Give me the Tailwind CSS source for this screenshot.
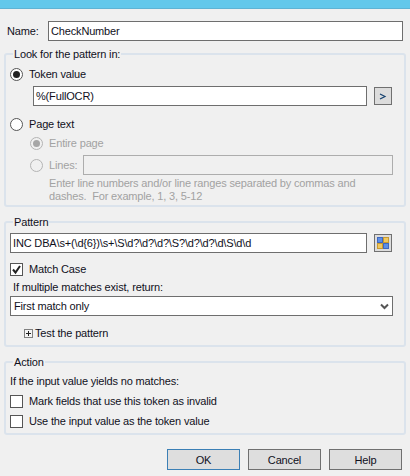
<!DOCTYPE html>
<html lang="en">
<head>
    <meta charset="UTF-8">
    <title>Regex token</title>
    <script src="https://cdn.jsdelivr.net/npm/@tailwindcss/browser@4"></script>
</head>
<body class="bg-[#f0f0f0] overflow-hidden">
    <div class="w-[410px] h-[476px] flex flex-col font-['Liberation_Sans',sans-serif] text-[11px] tracking-[-0.16px] leading-[16px] text-[#10101c]">
        <!-- title bar strip -->
        <div class="h-[9px] bg-[#63c8eb] border-b border-[#5fb3d4]"></div>

        <!-- Name -->
        <div class="mt-[12px] h-[20px] flex items-center pl-[7px] pr-[7px]">
            <span class="w-[41px]">Name:</span>
            <div class="w-[355px] h-[20px] bg-white border border-[#6e6e6e] px-[2px] flex items-center">CheckNumber</div>
        </div>

        <!-- Look for the pattern in -->
        <div class="relative mt-[12px] mx-[4px] h-[154px] border-2 border-[#dbe3ec] rounded-[3px] pl-[4px] pt-[11px]">
            <span class="absolute left-[7px] top-[-9px] bg-[#f0f0f0] px-[1px]">Look for the pattern in:</span>
            <div class="h-[16px] flex items-center">
                <span class="w-[13px] h-[13px] rounded-full border border-[#555] bg-white flex items-center justify-center"><span class="w-[7px] h-[7px] rounded-full bg-[#222]"></span></span>
                <span class="ml-[6px]">Token value</span>
            </div>
            <div class="mt-[4px] ml-[23px] flex items-center">
                <div class="w-[334px] h-[20px] bg-white border border-[#6e6e6e] px-[2px] flex items-center">%(FullOCR)</div>
                <div class="ml-[7px] w-[18px] h-[18px] bg-[#dcdcdc] border border-[#707070] flex items-center justify-center">
                    <svg width="8" height="7" viewBox="0 0 8 7"><path d="M1 1 L6 3.5 L1 6" fill="none" stroke="#14406e" stroke-width="1.2"/></svg>
                </div>
            </div>
            <div class="mt-[10px] h-[16px] flex items-center">
                <span class="w-[13px] h-[13px] rounded-full border border-[#555] bg-white"></span>
                <span class="ml-[6px]">Page text</span>
            </div>
            <div class="ml-[20px] text-[#a2a2a2]">
                <div class="mt-[3px] h-[16px] flex items-center">
                    <span class="w-[13px] h-[13px] rounded-full border border-[#b4b4b4] bg-[#f0f0f0] flex items-center justify-center"><span class="w-[7px] h-[7px] rounded-full bg-[#a6a6a6]"></span></span>
                    <span class="ml-[6px]">Entire page</span>
                </div>
                <div class="mt-[4px] h-[20px] flex items-center">
                    <span class="w-[13px] h-[13px] rounded-full border border-[#b4b4b4] bg-[#f0f0f0]"></span>
                    <span class="ml-[6px] w-[34px]">Lines:</span>
                    <div class="w-[310px] h-[20px] border border-[#adadad]"></div>
                </div>
                <p class="mt-[2px] ml-[19px] leading-[13px] w-[330px]">Enter line numbers and/or line ranges separated by commas and<br>dashes.&nbsp; For example, 1, 3, 5-12</p>
            </div>
        </div>

        <!-- Pattern -->
        <div class="relative mt-[14px] mx-[4px] h-[126px] border-2 border-[#dbe3ec] rounded-[3px] pl-[4px] pt-[10px]">
            <span class="absolute left-[7px] top-[-9px] bg-[#f0f0f0] px-[1px]">Pattern</span>
            <div class="flex items-center">
                <div class="w-[357px] h-[20px] bg-white border border-[#6e6e6e] px-[2px] flex items-center whitespace-nowrap overflow-hidden">INC DBA\s+(\d{6})\s+\S\d?\d?\d?\S?\d?\d?\d\S\d\d</div>
                <div class="ml-[7px] w-[18px] h-[18px] bg-[#dcdcdc] border border-[#707070] flex items-center justify-center">
                    <svg width="12" height="12" viewBox="0 0 12 12">
                        <rect x="0.5" y="0.5" width="5" height="5" fill="#5c8fe6" stroke="#3f68c0"/>
                        <rect x="6.5" y="0.5" width="5" height="5" fill="#f0c860" stroke="#c89a30"/>
                        <rect x="0.5" y="6.5" width="5" height="5" fill="#f0c860" stroke="#c89a30"/>
                        <rect x="6.5" y="6.5" width="5" height="5" fill="#5c8fe6" stroke="#3f68c0"/>
                    </svg>
                </div>
            </div>
            <div class="mt-[9px] h-[14px] flex items-center">
                <span class="w-[13px] h-[13px] border border-[#555] bg-white flex items-center justify-center">
                    <svg width="11" height="11" viewBox="0 0 11 11"><path d="M2 5.5 L4.5 8.5 L9 2" fill="none" stroke="#222" stroke-width="2"/></svg>
                </span>
                <span class="ml-[6px]">Match Case</span>
            </div>
            <div class="mt-[3px] ml-[3px]">If multiple matches exist, return:</div>
            <div class="mt-[1px] w-[383px] h-[20px] bg-white border border-[#6e6e6e] pl-[3px] pr-[3px] flex items-center justify-between">
                <span>First match only</span>
                <svg width="9" height="7" viewBox="0 0 9 7"><path d="M1 1.5 L4.5 5 L8 1.5" fill="none" stroke="#555" stroke-width="2"/></svg>
            </div>
            <div class="mt-[9px] ml-[14px] h-[16px] flex items-center">
                <span class="w-[9px] h-[9px] border border-[#808080] bg-[#f4f4f4] flex items-center justify-center">
                    <svg width="7" height="7" viewBox="0 0 7 7"><path d="M1 3.5 H6 M3.5 1 V6" stroke="#222" stroke-width="1"/></svg>
                </span>
                <span class="ml-[2px]">Test the pattern</span>
            </div>
        </div>

        <!-- Action -->
        <div class="relative mt-[14px] mx-[4px] h-[74px] border-2 border-[#dbe3ec] rounded-[3px] pl-[4px] pt-[10px]">
            <span class="absolute left-[7px] top-[-9px] bg-[#f0f0f0] px-[1px]">Action</span>
            <div>If the input value yields no matches:</div>
            <div class="mt-[5px] h-[14px] flex items-center">
                <span class="w-[13px] h-[13px] border border-[#555] bg-white"></span>
                <span class="ml-[6px]">Mark fields that use this token as invalid</span>
            </div>
            <div class="mt-[6px] h-[14px] flex items-center">
                <span class="w-[13px] h-[13px] border border-[#555] bg-white"></span>
                <span class="ml-[6px]">Use the input value as the token value</span>
            </div>
        </div>

        <!-- Buttons -->
        <div class="mt-[14px] flex justify-end gap-[8px] pr-[8px]">
            <div class="w-[73px] h-[21px] bg-[#dedede] border border-[#3b7fb5] flex items-center justify-center">OK</div>
            <div class="w-[73px] h-[21px] bg-[#dedede] border border-[#707070] flex items-center justify-center">Cancel</div>
            <div class="w-[73px] h-[21px] bg-[#dedede] border border-[#707070] flex items-center justify-center">Help</div>
        </div>
    </div>
</body>
</html>
